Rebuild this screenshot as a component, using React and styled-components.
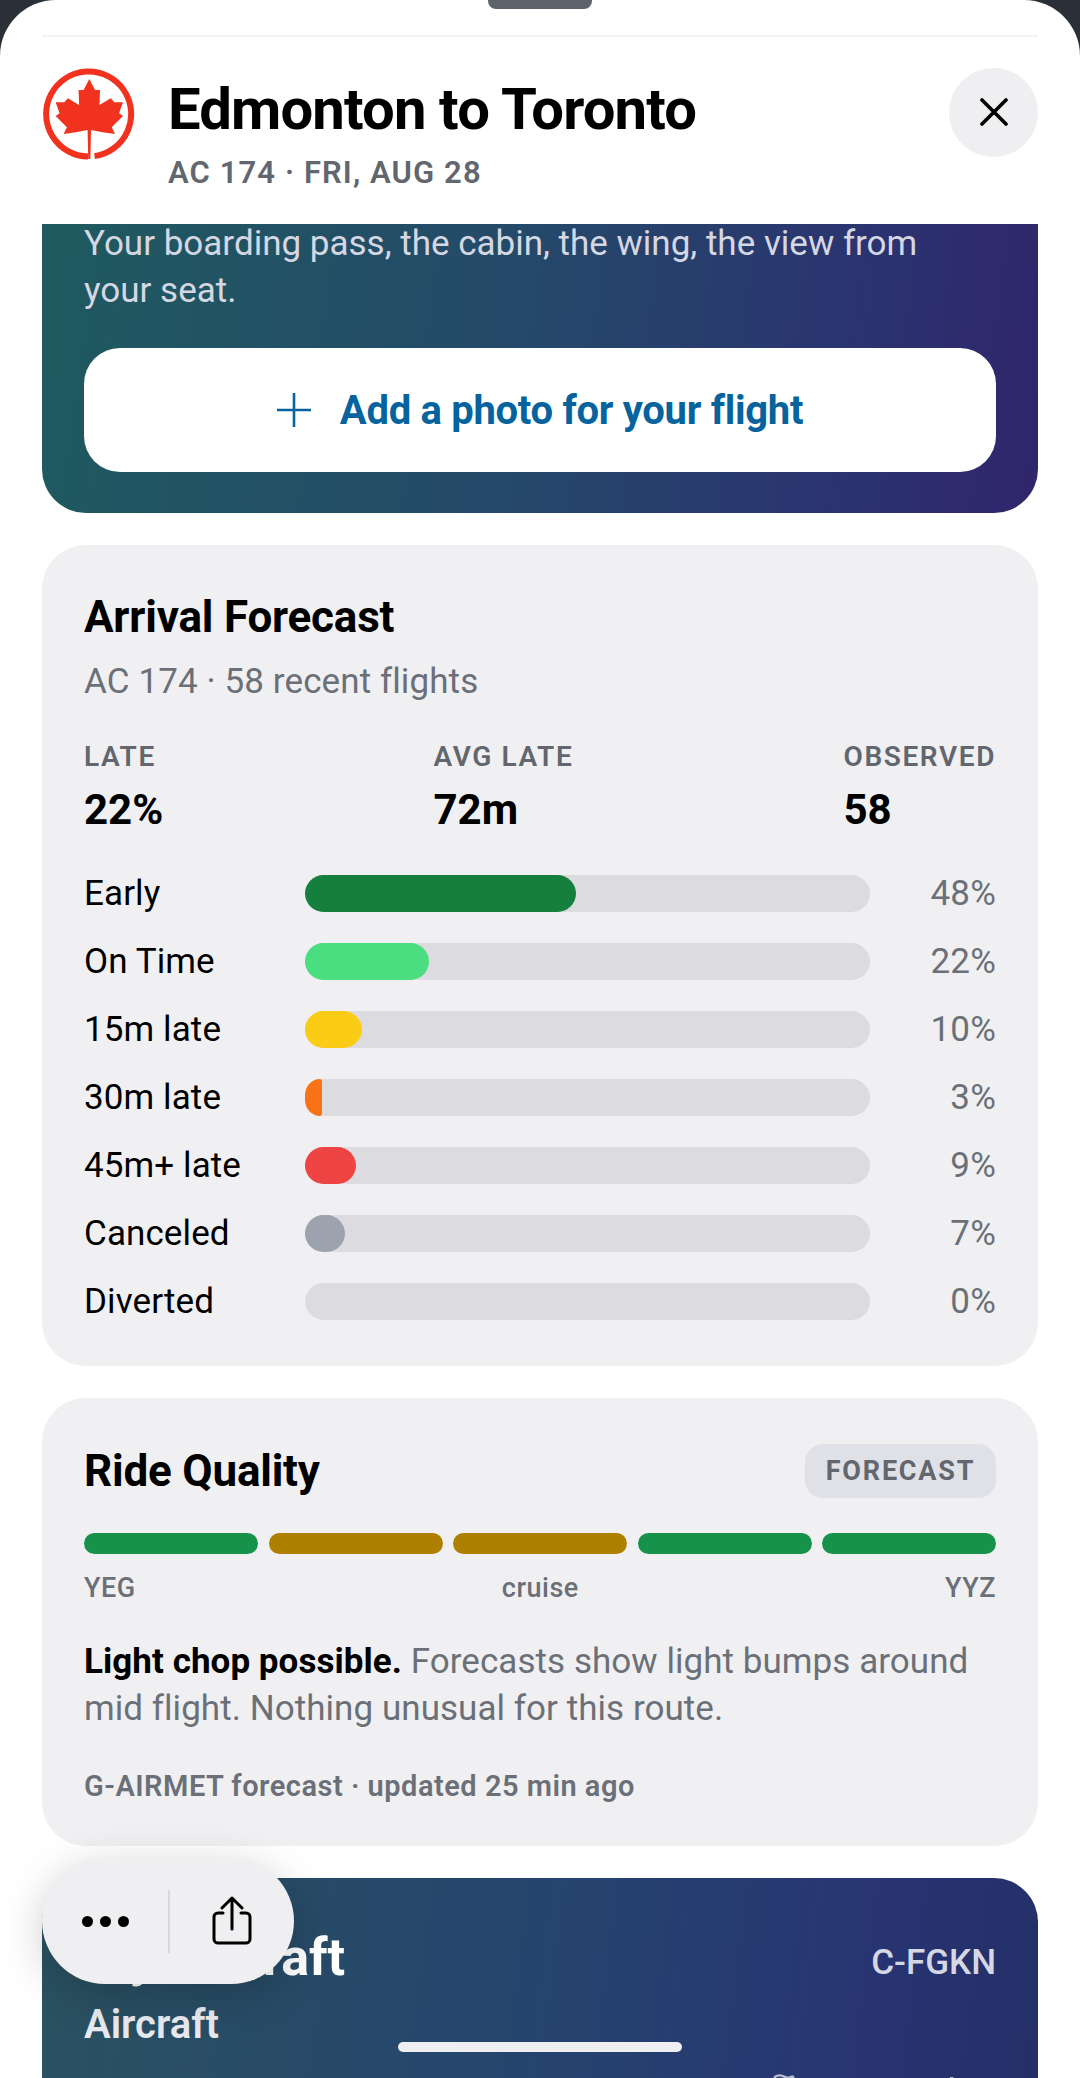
import styled, { createGlobalStyle } from "styled-components";
import { Flag } from "lucide-react";

const GlobalStyle = createGlobalStyle`
  html, body {
    margin: 0;
    padding: 0;
    background: #2b3038;
  }
  * { box-sizing: border-box; }
`;

/* ---------- SHEET ---------- */

const Sheet = styled.div`
  position: relative;
  width: 1080px;
  height: 2078px;
  overflow: hidden;
  display: flex;
  flex-direction: column;
  background: #fff;
  border-radius: 56px 56px 0 0;
  font-family: Roboto, "Liberation Sans", sans-serif;
  color: #000;
`;

const Grabber = styled.div`
  align-self: center;
  width: 104px;
  height: 9px;
  flex: none;
  background: #5f636e;
  border-radius: 0 0 8px 8px;
`;

const TopRule = styled.div`
  height: 2px;
  flex: none;
  margin: 26px 42px 0;
  background: #f4f4f6;
`;

const Header = styled.header`
  flex: none;
  height: 187px;
  padding: 31px 42px 0;
  display: flex;
  align-items: flex-start;
  gap: 32px;
`;

const Logo = styled.svg`
  width: 94px;
  height: 94px;
  flex: none;
`;

const HeaderText = styled.div`
  flex: 1;
  min-width: 0;
`;

const Title = styled.h1`
  margin: 11px 0 0;
  font-size: 58px;
  line-height: 60px;
  font-weight: 700;
  letter-spacing: -0.85px;
`;

const Subtitle = styled.div`
  margin-top: 16px;
  font-size: 31px;
  line-height: 36px;
  font-weight: 600;
  letter-spacing: 1.1px;
  color: #62666f;
`;

const CloseButton = styled.button`
  width: 89px;
  height: 89px;
  flex: none;
  padding: 0 0 2px;
  border: none;
  border-radius: 50%;
  background: #efeff1;
  display: flex;
  align-items: center;
  justify-content: center;
`;

/* ---------- SCROLL AREA ---------- */

const Scroll = styled.main`
  flex: 1;
  min-height: 0;
  overflow: hidden;
`;

const ScrollInner = styled.div`
  margin-top: -4px;
  padding: 0 42px;
  display: flex;
  flex-direction: column;
  gap: 32px;
`;

const PhotoCard = styled.section`
  padding: 0 42px 41px;
  border-radius: 0 0 44px 44px;
  background: linear-gradient(98deg, #1f5a5f 0%, #25486a 50%, #2b3270 82%, #30256b 100%);
`;

const PhotoText = styled.p`
  margin: 0;
  padding-right: 50px;
  font-size: 35px;
  line-height: 47px;
  color: #d5d7e2;
`;

const PhotoButton = styled.button`
  width: 100%;
  height: 124px;
  margin-top: 34px;
  border: none;
  border-radius: 36px;
  background: #fff;
  display: flex;
  align-items: center;
  justify-content: center;
  gap: 29px;
  font-family: inherit;
  font-size: 40px;
  font-weight: 700;
  letter-spacing: -0.3px;
  color: #06639e;
`;

const Card = styled.section`
  padding: ${(p) => p.$pad || "46px 42px"};
  border-radius: 44px;
  background: #f0f0f2;
`;

const CardTitle = styled.h2`
  margin: 0;
  font-size: 44px;
  line-height: 52px;
  font-weight: 700;
  letter-spacing: -0.2px;
`;

const CardSub = styled.div`
  margin-top: 15px;
  font-size: 35px;
  line-height: 47px;
  letter-spacing: 0.1px;
  color: #6b7078;
`;

const Stats = styled.div`
  margin-top: 35px;
  display: flex;
  justify-content: space-between;
`;

const StatLabel = styled.div`
  font-size: 28px;
  line-height: 34px;
  font-weight: 600;
  letter-spacing: 1.6px;
  color: #62666f;
`;

const StatValue = styled.div`
  margin-top: 10px;
  font-size: 42px;
  line-height: 52px;
  font-weight: 700;
`;

const Rows = styled.div`
  margin-top: 39px;
  display: flex;
  flex-direction: column;
  gap: 31px;
`;

const Row = styled.div`
  display: grid;
  grid-template-columns: 221px 565px 1fr;
  align-items: center;
  height: 37px;
`;

const RowLabel = styled.div`
  font-size: 35px;
  line-height: 37px;
  letter-spacing: 0.1px;
`;

const Track = styled.div`
  height: 37px;
  border-radius: 19px;
  background: #dcdce0;
`;

const Fill = styled.div`
  height: 100%;
  background: ${(p) => p.$color};
  border-radius: ${(p) => (p.$small ? "100% 14% 14% 100% / 50% 10% 10% 50%" : "19px")};
`;

const RowPct = styled.div`
  font-size: 35px;
  line-height: 37px;
  letter-spacing: 0.2px;
  text-align: right;
  color: #6b7078;
`;

const RideHead = styled.div`
  display: flex;
  align-items: center;
  justify-content: space-between;
`;

const Badge = styled.div`
  width: 191px;
  height: 54px;
  border-radius: 18px;
  background: #e0e1e6;
  display: flex;
  align-items: center;
  justify-content: center;
  font-size: 27px;
  font-weight: 700;
  letter-spacing: 1.8px;
  color: #62666f;
`;

const Segments = styled.div`
  margin-top: 35px;
  display: flex;
  gap: 10.5px;
`;

const Segment = styled.div`
  flex: 1;
  height: 21px;
  border-radius: 11px;
  background: ${(p) => p.$color};
`;

const RouteLabels = styled.div`
  margin-top: 19px;
  display: flex;
  justify-content: space-between;
  font-size: 27px;
  line-height: 30px;
  font-weight: 500;
  letter-spacing: 0.5px;
  color: #6b7078;
`;

const RideText = styled.p`
  margin: 35px 0 0;
  font-size: 35px;
  line-height: 47px;
  letter-spacing: 0.05px;
  color: #6b7078;

  strong {
    font-weight: 700;
    color: #000;
  }
`;

const RideNote = styled.div`
  margin-top: 37px;
  font-size: 29px;
  line-height: 34px;
  font-weight: 600;
  letter-spacing: 0.5px;
  color: #6b7078;
`;

const PlaneCard = styled.section`
  height: 300px;
  padding: 50px 42px 0;
  border-radius: 44px 44px 0 0;
  background: linear-gradient(98deg, #2a5260 0%, #25446e 50%, #283472 82%, #232f66 100%);
`;

const PlaneHead = styled.div`
  display: flex;
  align-items: center;
  justify-content: space-between;
`;

const PlaneTitle = styled.h2`
  margin: 0;
  font-size: 52px;
  line-height: 60px;
  font-weight: 700;
  color: #fff;
`;

const Tail = styled.div`
  margin-top: 8px;
  font-size: 35px;
  font-weight: 500;
  color: #d5d7e4;
`;

const PlaneSub = styled.div`
  margin-top: 13px;
  font-size: 40px;
  line-height: 48px;
  font-weight: 600;
  color: #e8e9ee;
`;

const ReportRow = styled.div`
  margin-top: 24px;
  display: flex;
  justify-content: flex-end;
  align-items: flex-start;
  gap: 14px;
  font-size: 29px;
  line-height: 32px;
  font-weight: 500;
  color: #b9bdd0;
`;

/* ---------- FLOATING BITS ---------- */

const ActionPill = styled.div`
  position: absolute;
  left: 42px;
  top: 1858px;
  width: 252px;
  height: 126px;
  display: flex;
  align-items: center;
  border-radius: 63px;
  background: #efeff1;
  box-shadow: 0 10px 44px rgba(0, 0, 0, 0.2);
`;

const Dots = styled.div`
  width: 126px;
  display: flex;
  justify-content: center;
  gap: 7px;
`;

const Dot = styled.span`
  width: 11px;
  height: 11px;
  border-radius: 50%;
  background: #000;
`;

const PillDivider = styled.div`
  width: 2px;
  height: 63px;
  flex: none;
  background: #d8d8db;
`;

const ShareSlot = styled.div`
  flex: 1;
  display: flex;
  justify-content: center;
`;

const HomeBar = styled.div`
  position: absolute;
  left: 398px;
  top: 2042px;
  width: 284px;
  height: 10px;
  border-radius: 5px;
  background: #efeff2;
`;

/* ---------- DATA ---------- */

const stats = [
  { label: "LATE", value: "22%" },
  { label: "AVG LATE", value: "72m" },
  { label: "OBSERVED", value: "58" },
];

const rows = [
  { label: "Early", pct: 48, color: "#15803d" },
  { label: "On Time", pct: 22, color: "#4ade80" },
  { label: "15m late", pct: 10, color: "#facc15" },
  { label: "30m late", pct: 3, color: "#f97316", small: true },
  { label: "45m+ late", pct: 9, color: "#ef4444" },
  { label: "Canceled", pct: 7, color: "#9ca3af" },
  { label: "Diverted", pct: 0, color: "transparent" },
];

const segments = ["#16924a", "#af8000", "#af8000", "#16924a", "#16924a"];

const leaf =
  "47.3,11 53,22 58,22 57.5,37 68.7,30.3 72.3,34.3 81,34.3 77,45.3 81,48 69.7,59.3 73,66 60.7,64.3 49,62 48.4,91 46.2,91 45.6,62 33.9,64.3 21.6,66 24.9,59.3 13.6,48 17.6,45.3 13.6,34.3 22.3,34.3 25.9,30.3 37.1,37 36.6,22 41.6,22";

export default function App() {
  return (
    <Sheet>
      <GlobalStyle />
      <Grabber />
      <TopRule />

      <Header>
        <Logo viewBox="0 0 94 94">
          <path
            d="M52.5 88.1 A42.5 42.5 0 1 0 46 88.5"
            fill="none"
            stroke="#f0321f"
            strokeWidth="6"
          />
          <polygon points={leaf} fill="#f0321f" />
        </Logo>
        <HeaderText>
          <Title>Edmonton to Toronto</Title>
          <Subtitle>AC 174 · FRI, AUG 28</Subtitle>
        </HeaderText>
        <CloseButton aria-label="Close">
          <svg width="28" height="28" viewBox="0 0 28 28">
            <path d="M2 2 L26 26 M26 2 L2 26" stroke="#000" strokeWidth="3.6" strokeLinecap="round" />
          </svg>
        </CloseButton>
      </Header>

      <Scroll>
        <ScrollInner>
          <PhotoCard>
            <PhotoText>Your boarding pass, the cabin, the wing, the view from your seat.</PhotoText>
            <PhotoButton>
              <svg width="34" height="34" viewBox="0 0 34 34">
                <path d="M17 0 V34 M0 17 H34" stroke="#06639e" strokeWidth="2.6" />
              </svg>
              Add a photo for your flight
            </PhotoButton>
          </PhotoCard>

          <Card>
            <CardTitle>Arrival Forecast</CardTitle>
            <CardSub>AC 174 · 58 recent flights</CardSub>
            <Stats>
              {stats.map((s) => (
                <div key={s.label}>
                  <StatLabel>{s.label}</StatLabel>
                  <StatValue>{s.value}</StatValue>
                </div>
              ))}
            </Stats>
            <Rows>
              {rows.map((r) => (
                <Row key={r.label}>
                  <RowLabel>{r.label}</RowLabel>
                  <Track>
                    <Fill $color={r.color} $small={r.small} style={{ width: `${r.pct}%` }} />
                  </Track>
                  <RowPct>{r.pct}%</RowPct>
                </Row>
              ))}
            </Rows>
          </Card>

          <Card $pad="46px 42px 43px">
            <RideHead>
              <CardTitle>Ride Quality</CardTitle>
              <Badge>FORECAST</Badge>
            </RideHead>
            <Segments>
              {segments.map((c, i) => (
                <Segment key={i} $color={c} />
              ))}
            </Segments>
            <RouteLabels>
              <span>YEG</span>
              <span>cruise</span>
              <span>YYZ</span>
            </RouteLabels>
            <RideText>
              <strong>Light chop possible.</strong> Forecasts show light bumps around mid flight. Nothing unusual for this route.
            </RideText>
            <RideNote>G-AIRMET forecast · updated 25 min ago</RideNote>
          </Card>

          <PlaneCard>
            <PlaneHead>
              <PlaneTitle>My Aircraft</PlaneTitle>
              <Tail>C-FGKN</Tail>
            </PlaneHead>
            <PlaneSub>Aircraft</PlaneSub>
            <ReportRow>
              <Flag size={28} strokeWidth={2} />
              Report update
            </ReportRow>
          </PlaneCard>
        </ScrollInner>
      </Scroll>

      <ActionPill>
        <Dots>
          <Dot />
          <Dot />
          <Dot />
        </Dots>
        <PillDivider />
        <ShareSlot>
          <svg width="40" height="50" viewBox="0 0 40 50" fill="none" stroke="#000" strokeWidth="3" strokeLinecap="round" strokeLinejoin="round">
            <path d="M11 17 H6 a4 4 0 0 0 -4 4 V43 a4 4 0 0 0 4 4 H34 a4 4 0 0 0 4 -4 V21 a4 4 0 0 0 -4 -4 H29" />
            <path d="M20 33 V2 M10 12 L20 2 L30 12" />
          </svg>
        </ShareSlot>
      </ActionPill>
      <HomeBar />
    </Sheet>
  );
}
